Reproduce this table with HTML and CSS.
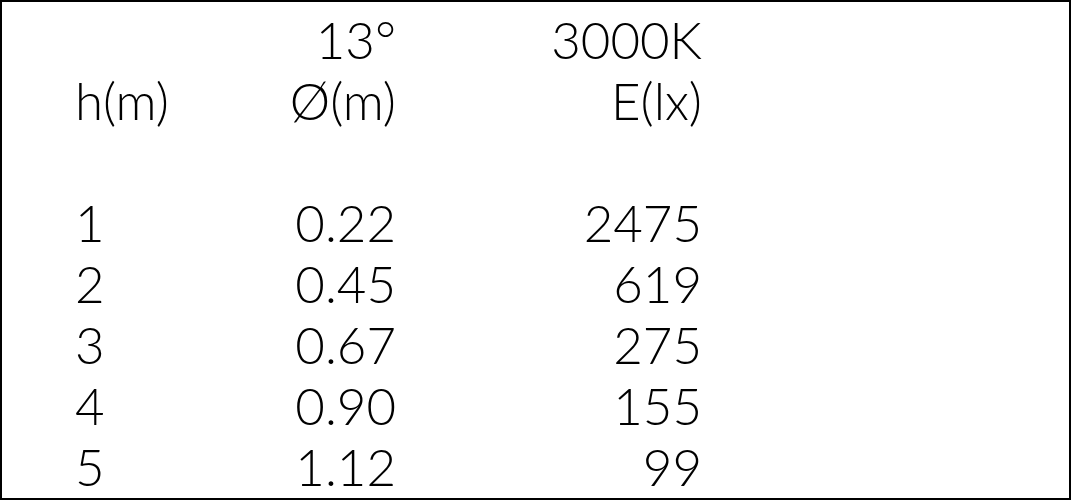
FILE: index.html
```html
<!DOCTYPE html>
<html lang="en">
<head>
  <meta charset="UTF-8" />
  <title>Beam table</title>
  <link rel="stylesheet" href="styles.css">
</head>
<body>
  <div class="sheet">
    <table class="beam-table">
      <thead>
        <tr>
          <th class="col-h"></th>
          <th class="col-d">13°</th>
          <th class="col-e">3000K</th>
        </tr>
        <tr>
          <th class="col-h">h(m)</th>
          <th class="col-d">Ø(m)</th>
          <th class="col-e">E(lx)</th>
        </tr>
        <tr class="spacer"><td colspan="3"></td></tr>
      </thead>
      <tbody>
        <tr><td class="col-h">1</td><td class="col-d">0.22</td><td class="col-e">2475</td></tr>
        <tr><td class="col-h">2</td><td class="col-d">0.45</td><td class="col-e">619</td></tr>
        <tr><td class="col-h">3</td><td class="col-d">0.67</td><td class="col-e">275</td></tr>
        <tr><td class="col-h">4</td><td class="col-d">0.90</td><td class="col-e">155</td></tr>
        <tr><td class="col-h">5</td><td class="col-d">1.12</td><td class="col-e">99</td></tr>
      </tbody>
    </table>
  </div>
</body>
</html>
```

FILE: styles.css
```css
body {
  margin: 0;
  background: #fff;
}
.sheet {
  width: 1071px;
  height: 500px;
  box-sizing: border-box;
  border: 2px solid #000;
  padding: 7px 0 0 73px;
  overflow: hidden;
  font-family: Lato, "Open Sans", sans-serif;
  font-size: 51px;
  color: #000;
}
.beam-table {
  border-collapse: collapse;
}
.beam-table th,
.beam-table td {
  padding: 0;
  height: 61px;
  line-height: 61px;
  font-weight: 300;
  white-space: nowrap;
}
.col-h {
  width: 160px;
  text-align: left;
}
.col-d {
  width: 161px;
  text-align: right;
}
.col-e {
  width: 306px;
  text-align: right;
}
```
